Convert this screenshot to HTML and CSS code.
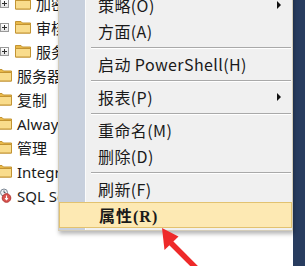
FILE: index.html
```html
<!DOCTYPE html>
<html>
<head>
<meta charset="utf-8">
<link rel="stylesheet" href="styles.css">
</head>
<body>
<div class="screen">
  <div class="tree">
    <div class="row l1"><span class="exp"></span><svg class="folder" viewBox="0 0 16 14"><path d="M0.5 1.5h5.5l1.5 1.5h8v10h-15z" fill="#e9b949" stroke="#c39433"/><path d="M0.5 4.5h15v8.5h-15z" fill="#f9dc8c" stroke="#c39433"/></svg><span class="label">加密提供程序</span></div>
    <div class="row l1"><span class="exp"></span><svg class="folder" viewBox="0 0 16 14"><path d="M0.5 1.5h5.5l1.5 1.5h8v10h-15z" fill="#e9b949" stroke="#c39433"/><path d="M0.5 4.5h15v8.5h-15z" fill="#f9dc8c" stroke="#c39433"/></svg><span class="label">审核</span></div>
    <div class="row l1"><span class="exp"></span><svg class="folder" viewBox="0 0 16 14"><path d="M0.5 1.5h5.5l1.5 1.5h8v10h-15z" fill="#e9b949" stroke="#c39433"/><path d="M0.5 4.5h15v8.5h-15z" fill="#f9dc8c" stroke="#c39433"/></svg><span class="label">服务器审核规范</span></div>
    <div class="row"><svg class="folder" viewBox="0 0 16 14"><path d="M0.5 1.5h5.5l1.5 1.5h8v10h-15z" fill="#e9b949" stroke="#c39433"/><path d="M0.5 4.5h15v8.5h-15z" fill="#f9dc8c" stroke="#c39433"/></svg><span class="label">服务器对象</span></div>
    <div class="row"><svg class="folder" viewBox="0 0 16 14"><path d="M0.5 1.5h5.5l1.5 1.5h8v10h-15z" fill="#e9b949" stroke="#c39433"/><path d="M0.5 4.5h15v8.5h-15z" fill="#f9dc8c" stroke="#c39433"/></svg><span class="label">复制</span></div>
    <div class="row"><svg class="folder" viewBox="0 0 16 14"><path d="M0.5 1.5h5.5l1.5 1.5h8v10h-15z" fill="#e9b949" stroke="#c39433"/><path d="M0.5 4.5h15v8.5h-15z" fill="#f9dc8c" stroke="#c39433"/></svg><span class="label">AlwaysOn 高可用性</span></div>
    <div class="row"><svg class="folder" viewBox="0 0 16 14"><path d="M0.5 1.5h5.5l1.5 1.5h8v10h-15z" fill="#e9b949" stroke="#c39433"/><path d="M0.5 4.5h15v8.5h-15z" fill="#f9dc8c" stroke="#c39433"/></svg><span class="label">管理</span></div>
    <div class="row"><svg class="folder" viewBox="0 0 16 14"><path d="M0.5 1.5h5.5l1.5 1.5h8v10h-15z" fill="#e9b949" stroke="#c39433"/><path d="M0.5 4.5h15v8.5h-15z" fill="#f9dc8c" stroke="#c39433"/></svg><span class="label">Integration Services 目录</span></div>
    <div class="row agent"><svg class="agenticon" viewBox="0 0 14 15"><circle cx="5" cy="4.5" r="3.5" fill="#eef0f3" stroke="#7c8794"/><path d="M5 2.5v2h1.5" stroke="#55606c" fill="none"/><circle cx="7.5" cy="10" r="4.3" fill="#d9534f" stroke="#b23a36"/><path d="M7.5 7.5v4M6 10.2l1.5 1.6 1.5-1.6" stroke="#fff" fill="none" stroke-width="1.1"/></svg><span class="label">SQL Server 代理</span></div>
  </div>
  <div class="side"></div>

  <div class="menu">
    <div class="item"><span class="text">策略(O)</span><span class="sub"></span></div>
    <div class="item"><span class="text">方面(A)</span></div>
    <div class="sep"></div>
    <div class="item"><span class="text">启动 PowerShell(H)</span></div>
    <div class="sep"></div>
    <div class="item"><span class="text">报表(P)</span><span class="sub"></span></div>
    <div class="sep"></div>
    <div class="item"><span class="text">重命名(M)</span></div>
    <div class="item"><span class="text">删除(D)</span></div>
    <div class="sep"></div>
    <div class="item"><span class="text">刷新(F)</span></div>
    <div class="item active"><span class="text">属性(R)</span></div>
  </div>

  <svg class="pointer" viewBox="0 0 305 266" width="305" height="266">
    <path d="M171 243 L198 270" stroke="#ee2a2a" stroke-width="5.5" fill="none"/>
    <path d="M162 228 L164.5 250 L178.5 236.5 Z" fill="#ee2a2a"/>
  </svg>
</div>
</body>
</html>
```

FILE: styles.css
```css
html, body {
  margin: 0;
  padding: 0;
  background: #ffffff;
}

.screen {
  position: relative;
  width: 305px;
  height: 266px;
  overflow: hidden;
  display: flex;
  font-family: "Noto Sans", "Noto Sans CJK SC", sans-serif;
}

.tree {
  flex: 1;
  min-width: 0;
  margin-top: -9px;
  margin-left: -4px;
  overflow: hidden;
  background: #ffffff;
}

.row {
  height: 24px;
  display: flex;
  align-items: center;
  white-space: nowrap;
  font-size: 15px;
  color: #1b1b1b;
}

.row.l1 {
  padding-left: 4px;
}

.exp {
  width: 9px;
  height: 9px;
  box-sizing: border-box;
  border: 1px solid #9a9a9a;
  background: linear-gradient(#ffffff, #e4e4e4);
  position: relative;
  margin-right: 6px;
  flex: none;
}

.exp::before {
  content: "";
  position: absolute;
  left: 1px;
  top: 3px;
  width: 5px;
  height: 1px;
  background: #2f2f2f;
}

.exp::after {
  content: "";
  position: absolute;
  left: 3px;
  top: 1px;
  width: 1px;
  height: 5px;
  background: #2f2f2f;
}

.folder {
  width: 16px;
  height: 14px;
  flex: none;
  margin-right: 5px;
}

.agenticon {
  width: 14px;
  height: 15px;
  flex: none;
  margin-left: 3px;
  margin-right: 4px;
}

.side {
  width: 12px;
  flex: none;
  background: #283c5f;
}

.menu {
  position: absolute;
  left: 58px;
  top: -11px;
  width: 235px;
  box-sizing: border-box;
  border: 1px solid #d3ccb9;
  padding: 2px 0 2px;
  background: linear-gradient(to right, #c8d0dd 0, #c8d0dd 26px, #fbfbfb 26px, #fbfbfb 27px, #f0f0f0 27px);
  box-shadow: 1px 3px 4px rgba(0, 0, 0, 0.28);
  font-family: "Noto Sans CJK SC", sans-serif;
  font-size: 16px;
  color: #1a1a1a;
}

.item {
  height: 26px;
  display: flex;
  align-items: center;
  padding-left: 39px;
  padding-right: 11px;
  box-sizing: border-box;
  white-space: nowrap;
  letter-spacing: 0.4px;
}

.item .text {
  flex: 1;
}

.sub {
  width: 0;
  height: 0;
  border-top: 4px solid transparent;
  border-bottom: 4px solid transparent;
  border-left: 4px solid #111;
}

.sep {
  height: 7px;
  display: flex;
  align-items: center;
  padding-left: 32px;
  padding-right: 1px;
}

.sep::before {
  content: "";
  flex: 1;
  height: 1px;
  background: #a9a9a9;
  box-shadow: 0 1px 0 #ffffff;
}

.item.active {
  background: #fde9b3;
  border: 1px solid #e2c270;
  padding-left: 39px;
  font-family: "Liberation Serif", "Noto Sans CJK SC", serif;
  font-weight: bold;
  letter-spacing: 1px;
}

.pointer {
  position: absolute;
  left: 0;
  top: 0;
  pointer-events: none;
}
```
